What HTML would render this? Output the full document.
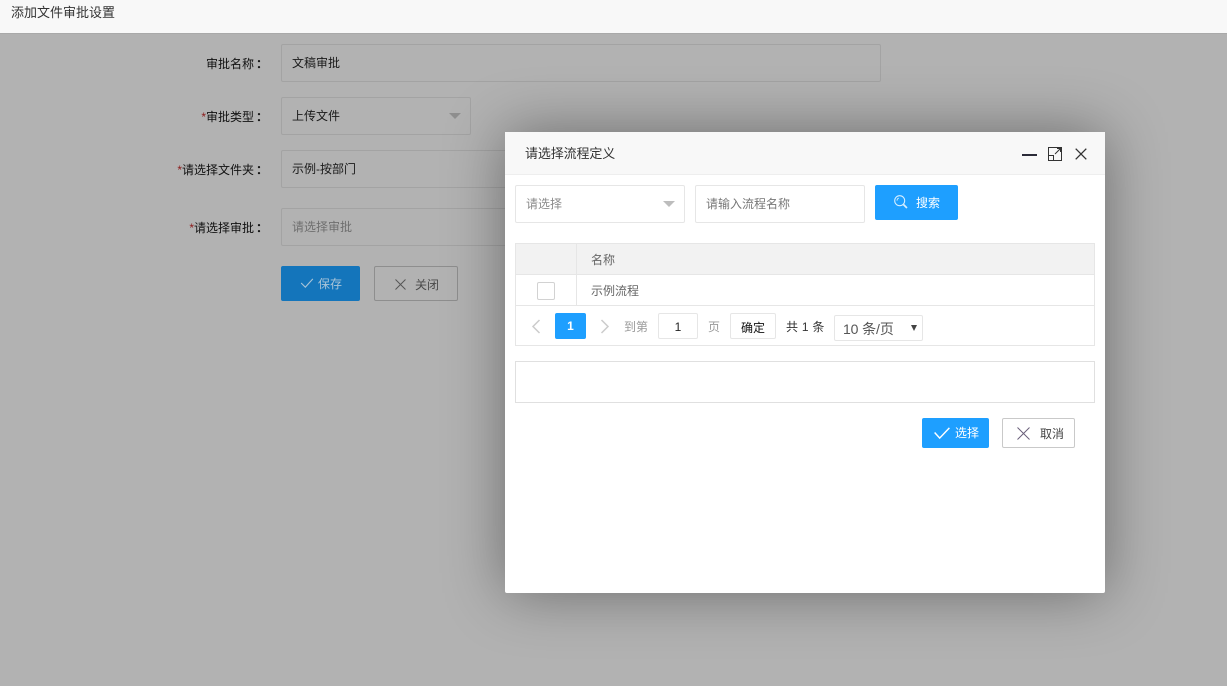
<!DOCTYPE html>
<html lang="zh-CN">
<head>
<meta charset="utf-8">
<title>添加文件审批设置</title>
<style>
*{box-sizing:border-box}
html,body{margin:0;padding:0;width:1227px;height:686px;overflow:hidden;background:#b2b2b2;
font-family:"Liberation Sans","Noto Sans CJK SC",sans-serif;font-size:12px;color:#000}
.a{position:absolute;white-space:nowrap}
.top{left:0;top:0;width:1227px;height:34px;background:#f8f8f8;border-bottom:1px solid #a9a9a9;font-size:13px;color:#333;line-height:25px;padding-left:11px}
.lab{right:973px;text-align:right;line-height:20px;color:#111}
.lab b{font-weight:400;color:#8b1a1a}
.col{left:256px;line-height:20px;color:#111;font-weight:700}
.inp{left:281px;height:38px;border:1px solid #a3a3a3;border-radius:2px;line-height:37px;padding-left:10px;color:#1a1a1a}
.tri{width:0;height:0;border-left:6px solid transparent;border-right:6px solid transparent;border-top:6px solid #bdbdbd}
.dlg{left:505px;top:132px;width:600px;height:461px;background:#fff;border-radius:2px;box-shadow:0 0 60px rgba(0,0,0,.4)}
.hd{left:0;top:0;width:600px;height:43px;background:#f8f8f8;border-bottom:1px solid #eee;line-height:44px;padding-left:20px;color:#333;font-size:13px}
.box{border:1px solid #e6e6e6;border-radius:2px;background:#fff}
.g{color:#8a8a8a}
svg{position:absolute;display:block;overflow:visible}
</style>
</head>
<body>
<div class="a top">添加文件审批设置</div>

<div class="a lab" style="top:54px">审批名称</div><div class="a col" style="top:54px">：</div>
<div class="a lab" style="top:107px"><b>*</b>审批类型</div><div class="a col" style="top:107px">：</div>
<div class="a lab" style="top:160px"><b>*</b>请选择文件夹</div><div class="a col" style="top:160px">：</div>
<div class="a lab" style="top:218px"><b>*</b>请选择审批</div><div class="a col" style="top:218px">：</div>

<div class="a inp" style="top:44px;width:600px">文稿审批</div>
<div class="a inp" style="top:97px;width:190px">上传文件</div>
<div class="a tri" style="left:449px;top:113px;border-top-color:#8f8f8f"></div>
<div class="a inp" style="top:150px;width:300px">示例-按部门</div>
<div class="a inp" style="top:208px;width:300px;color:#6f6f6f">请选择审批</div>

<div class="a" style="left:281px;top:266px;width:79px;height:35px;background:#1475bb;border-radius:2px;color:#a9c4d8;line-height:36px;padding-left:37px;font-size:12px">保存</div>
<svg style="left:300px;top:278px" width="14" height="10" viewBox="0 0 16 12"><path d="M1 6l5 5 9-10" fill="none" stroke="#a9c4d8" stroke-width="1.300"/></svg>
<div class="a" style="left:374px;top:266px;width:84px;height:35px;border:1px solid #8e8e8e;border-radius:2px;color:#4a4a4a;line-height:36px;padding-left:40px">关闭</div>
<svg style="left:395px;top:279px" width="11" height="11" viewBox="0 0 11 11"><path d="M.5.500l10 10M10.500.500l-10 10" fill="none" stroke="#555" stroke-width="1"/></svg>

<div class="a dlg">
  <div class="a hd" style="letter-spacing:-.01em">请选择流程定义</div>
  <svg style="left:517px;top:22px" width="15" height="2"><rect width="15" height="2" fill="#2b2b38"/></svg>
  <svg style="left:543px;top:15px" width="14" height="14" viewBox="0 0 14 14"><path d="M.5 8.500V.500h13v13h-8M.5 8.500h5v5h-5zM7 7l5.500-5.500M9 1.500h3.500V5" fill="none" stroke="#333" stroke-width="1"/></svg>
  <svg style="left:570px;top:16px" width="12" height="12" viewBox="0 0 12 12"><path d="M.7.700l10.600 10.600M11.300.7L.7 11.300" fill="none" stroke="#333" stroke-width="1.300"/></svg>

  <div class="a box g" style="left:10px;top:53px;width:170px;height:38px;line-height:37px;padding-left:10px">请选择</div>
  <div class="a tri" style="left:158px;top:69px"></div>
  <div class="a box g" style="left:190px;top:53px;width:170px;height:38px;line-height:37px;padding-left:10px;color:#777">请输入流程名称</div>
  <div class="a" style="left:370px;top:53px;width:83px;height:35px;background:#1e9fff;border-radius:2px;color:#fff;line-height:36px;padding-left:41px">搜索</div>
  <svg style="left:389px;top:63px" width="14" height="14" viewBox="0 0 16 16"><circle cx="6.500" cy="6.500" r="5.700" fill="none" stroke="#d6eeff" stroke-width="1.200"/><path d="M10.800 10.800l4 4" stroke="#d6eeff" stroke-width="2"/><path d="M3.500 6.500a3 3 0 0 1 2-3" fill="none" stroke="#d6eeff"/></svg>

  <div class="a" style="left:10px;top:111px;width:580px;height:103px;border:1px solid #e6e6e6"></div>
  <div class="a" style="left:11px;top:112px;width:578px;height:31px;background:#f2f2f2;border-bottom:1px solid #e6e6e6"></div>
  <div class="a" style="left:71px;top:112px;width:1px;height:62px;background:#e6e6e6"></div>
  <div class="a" style="left:11px;top:173px;width:578px;height:1px;background:#e6e6e6"></div>
  <div class="a g" style="left:86px;top:118px;line-height:20px;color:#666">名称</div>
  <div class="a" style="left:32px;top:150px;width:18px;height:18px;border:1px solid #d2d2d2;border-radius:2px"></div>
  <div class="a" style="left:86px;top:149px;line-height:20px;color:#666">示例流程</div>

  <svg style="left:26px;top:187px" width="10" height="15" viewBox="0 0 10 15"><path d="M8.500 1L2 7.500 8.500 14" fill="none" stroke="#ccc" stroke-width="1.500"/></svg>
  <div class="a" style="left:50px;top:181px;width:31px;height:26px;background:#1e9fff;border-radius:2px;color:#fff;text-align:center;line-height:26px;font-weight:700;font-size:12px">1</div>
  <svg style="left:95px;top:187px" width="10" height="15" viewBox="0 0 10 15"><path d="M1.500 1L8 7.500 1.500 14" fill="none" stroke="#ccc" stroke-width="1.500"/></svg>
  <div class="a" style="left:119px;top:186px;line-height:18px;color:#999">到第</div>
  <div class="a box" style="left:153px;top:181px;width:40px;height:26px;text-align:center;line-height:27px;color:#222">1</div>
  <div class="a" style="left:203px;top:186px;line-height:18px;color:#999">页</div>
  <div class="a box" style="left:225px;top:181px;width:46px;height:26px;text-align:center;line-height:28px;color:#111;font-size:12px">确定</div>
  <div class="a" style="left:281px;top:186px;line-height:18px;color:#333;word-spacing:.5px">共 1 条</div>
  <div class="a box" style="left:329px;top:183px;width:89px;height:26px;line-height:26px;padding-left:8px;font-size:14px;letter-spacing:-.1px;color:#555">10 条/页</div>
  <div class="a tri" style="left:406px;top:193px;border-left-width:3px;border-right-width:3px;border-top-color:#444"></div>

  <div class="a" style="left:10px;top:229px;width:580px;height:42px;border:1px solid #e0e0e0"></div>

  <div class="a" style="left:417px;top:286px;width:67px;height:30px;background:#1e9fff;border-radius:2px;color:#fff;line-height:31px;padding-left:33px">选择</div>
  <svg style="left:428px;top:295px" width="18" height="12" viewBox="0 0 18 13"><path d="M1 6l5.500 6L17 1" fill="none" stroke="#fff" stroke-width="1.600"/></svg>
  <div class="a" style="left:497px;top:286px;width:73px;height:30px;border:1px solid #c9c9c9;border-radius:2px;color:#444;line-height:31px;padding-left:37px">取消</div>
  <svg style="left:512px;top:295px" width="13" height="13" viewBox="0 0 13 13"><path d="M.5.500l12 12M12.500.500l-12 12" fill="none" stroke="#6a5f7a" stroke-width="1"/></svg>
</div>
</body>
</html>
